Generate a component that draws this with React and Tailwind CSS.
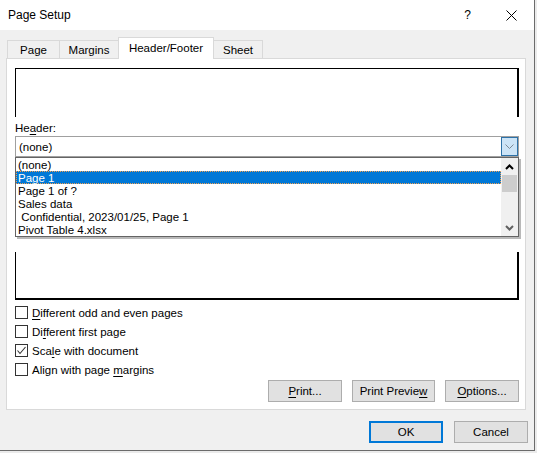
import React from "react";

const U = ({ children }) => <span className="underline decoration-1 underline-offset-[2px]">{children}</span>;

function Check({ checked, children }) {
  return (
    <div className="h-[19px] flex items-center">
      <div className="w-[13px] h-[13px] border border-[#333333] bg-white flex items-center justify-center">
        {checked && (
          <svg width="11" height="11" viewBox="0 0 11 11">
            <polyline points="1.5,5.5 4,8.5 9.5,2" fill="none" stroke="#333" strokeWidth="1.1" />
          </svg>
        )}
      </div>
      <span className="ml-[4px] pt-[2px]">{children}</span>
    </div>
  );
}

function Btn({ children, w, primary }) {
  return (
    <div
      className={
        primary
          ? "h-[22px] flex items-center justify-center bg-[#e1e1e1] border-2 border-[#0078d7] pt-[1px]"
          : "h-[22px] flex items-center justify-center bg-[#e1e1e1] border border-[#adadad] pt-[1px]"
      }
      style={{ width: w }}
    >
      {children}
    </div>
  );
}

export default function App() {
  const items = ["(none)", "Page 1", "Page 1 of ?", "Sales data", "\u00a0Confidential, 2023/01/25, Page 1", "Pivot Table 4.xlsx"];
  return (
    <div
      className="w-[537px] h-[453px] bg-[#ebebeb] overflow-hidden text-[11.5px] text-black leading-[15px]"
      style={{ fontFamily: '"Liberation Sans", Arial, sans-serif' }}
    >
      <div className="w-[535px] h-[451px] border-r border-b border-[#6b6b6b] bg-[#f0f0f0] flex flex-col">
        {/* title bar */}
        <div className="h-[30px] bg-white flex items-center shrink-0">
          <span className="ml-[8px] text-[12px] pt-[1px]">Page Setup</span>
          <span className="ml-auto mr-[35px] text-[12px] pt-[1px]">?</span>
          <svg width="11" height="11" viewBox="0 0 11 11" className="mr-[17px]">
            <line x1="0.5" y1="0.5" x2="10.5" y2="10.5" stroke="#000" strokeWidth="1" />
            <line x1="10.5" y1="0.5" x2="0.5" y2="10.5" stroke="#000" strokeWidth="1" />
          </svg>
        </div>

        {/* body */}
        <div className="flex flex-col pl-[6px] pr-[8px] pt-[7px]">
          {/* tabs */}
          <div className="h-[21px] flex items-end pl-[1px] relative z-10">
            <div className="w-[52px] h-[18px] border-t border-l border-[#d9d9d9] flex items-center justify-center pt-[1px]">Page</div>
            <div className="w-[59px] h-[18px] border-t border-l border-[#d9d9d9] flex items-center justify-center pt-[1px]">Margins</div>
            <div className="w-[96px] h-[22px] -mb-[1px] border-t border-l border-r border-[#d9d9d9] bg-white flex items-center justify-center">Header/Footer</div>
            <div className="w-[49px] h-[18px] border-t border-r border-[#d9d9d9] flex items-center justify-center pt-[1px]">Sheet</div>
          </div>

          {/* panel */}
          <div className="h-[352px] bg-white border border-[#d9d9d9] relative flex flex-col pl-[8px] pr-[6px]">
            <div className="mt-[9px] h-[49px] border-t border-l border-r-2 border-black"></div>
            <div className="mt-[3px] h-[15px] pt-[1px]">He<U>a</U>der:</div>
            <div className="mt-[1px] h-[21px] border border-[#a0a0a0] flex items-center pl-[3px] pt-[1px] relative">
              <span>(none)</span>
              <div className="absolute right-0 top-0 w-[17px] h-[19px] bg-[#cce4f7] border border-[#2e72a8] flex items-center justify-center">
                <svg width="9" height="5" viewBox="0 0 9 5">
                  <polyline points="0.5,0.5 4.5,4.5 8.5,0.5" fill="none" stroke="#7d8a96" strokeWidth="1" />
                </svg>
              </div>
            </div>
            <div className="mt-[95px] h-[48px] border-l border-r-2 border-b-2 border-black"></div>
            <div className="mt-[3px] flex flex-col">
              <Check><U>D</U>ifferent odd and even pages</Check>
              <Check>Di<U>f</U>ferent first page</Check>
              <Check checked>Sca<U>l</U>e with document</Check>
              <Check>Align with page <U>m</U>argins</Check>
            </div>
            <div className="mt-[1px] flex justify-end gap-[10px]">
              <Btn w={74}><U>P</U>rint...</Btn>
              <Btn w={83}>Print Previe<U>w</U></Btn>
              <Btn w={74}><U>O</U>ptions...</Btn>
            </div>

            {/* dropdown list overlay */}
            <div className="absolute left-[8px] top-[98px] w-[504px] h-[80px] bg-white border border-[#646464] shadow-[2px_2px_0_#b9b9b9] flex">
              <div className="flex-1 flex flex-col">
                {items.map((t, i) =>
                  i === 1 ? (
                    <div key={i} className="h-[13px] leading-[13px] bg-[#0078d7] text-white border border-dotted border-[#f0a050] pl-[1px] flex items-center">
                      <span className="translate-y-[1px]">{t}</span>
                    </div>
                  ) : (
                    <div key={i} className="h-[13px] leading-[13px] pl-[2px]">
                      <span className="inline-block translate-y-[1px]">{t}</span>
                    </div>
                  )
                )}
              </div>
              <div className="w-[17px] bg-[#f0f0f0] flex flex-col items-center">
                <div className="h-[17px] flex items-center justify-center">
                  <svg width="9" height="6" viewBox="0 0 9 6">
                    <polyline points="1,5 4.5,1.5 8,5" fill="none" stroke="#000" strokeWidth="2" />
                  </svg>
                </div>
                <div className="w-[15px] h-[17px] bg-[#cdcdcd]"></div>
                <div className="flex-1"></div>
                <div className="h-[17px] flex items-center justify-center">
                  <svg width="9" height="6" viewBox="0 0 9 6">
                    <polyline points="1,1 4.5,4.5 8,1" fill="none" stroke="#606060" strokeWidth="2" />
                  </svg>
                </div>
              </div>
            </div>
          </div>

          {/* OK / Cancel */}
          <div className="mt-[11px] flex justify-end gap-[11px] -mr-[2px]">
            <Btn w={74} primary>OK</Btn>
            <Btn w={74}>Cancel</Btn>
          </div>
        </div>
      </div>
    </div>
  );
}
